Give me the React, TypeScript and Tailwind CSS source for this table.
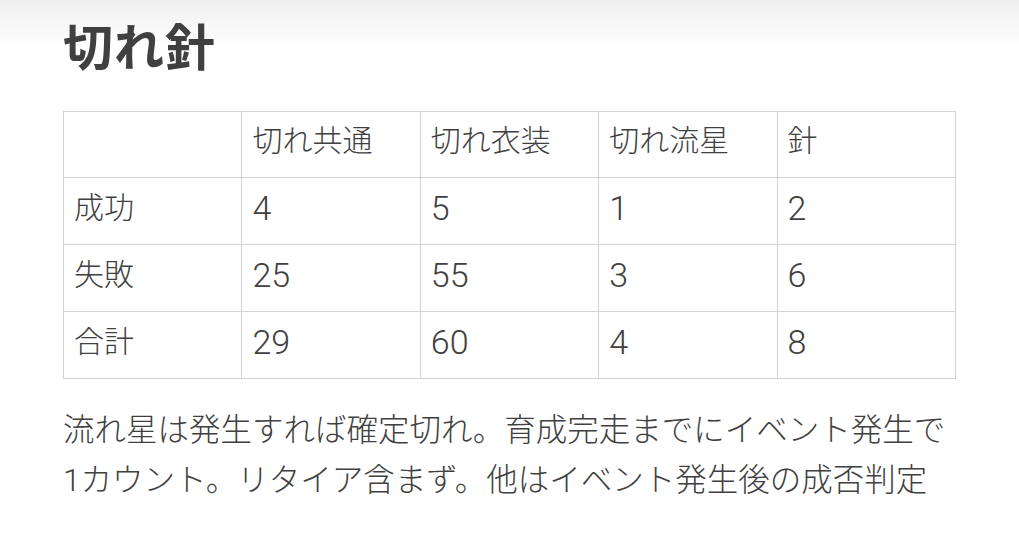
import React from 'react';

const head = ['', '切れ共通', '切れ衣装', '切れ流星', '針'];
const rows = [
  ['成功', '4', '5', '1', '2'],
  ['失敗', '25', '55', '3', '6'],
  ['合計', '29', '60', '4', '8'],
];

const App: React.FC = () => {
  return (
    <div
      className="relative min-h-[543px] bg-white text-[#404040] overflow-hidden"
      style={{ fontFamily: 'Roboto, "Noto Sans CJK JP", sans-serif' }}
    >
      <div className="pointer-events-none absolute inset-x-0 top-0 h-[48px] bg-gradient-to-b from-[#efefef] to-transparent" />
      <div className="relative w-[893px] ml-[63px] pt-[14px]">
        <h1 className="text-[50px] font-bold leading-[70px] tracking-[1px]">切れ針</h1>
        <table className="mt-[27px] w-full table-fixed border-collapse text-[30px] font-light">
          <tbody>
            <tr>
              {head.map((h, i) => (
                <td key={i} className="border border-[#d2d2d2] h-[66px] px-[10px] pb-[7px] leading-[44px] align-middle">
                  {h}
                </td>
              ))}
            </tr>
            {rows.map((r, ri) => (
              <tr key={ri}>
                {r.map((c, ci) => (
                  <td
                    key={ci}
                    className={`border border-[#d2d2d2] h-[67px] px-[10px] pb-[6px] leading-[44px] align-middle ${
                      ci === 0 ? '' : 'text-[34px]'
                    }`}
                  >
                    {c}
                  </td>
                ))}
              </tr>
            ))}
          </tbody>
        </table>
        <p className="mt-[27px] text-[31.5px] leading-[50px] font-light">
          流れ星は発生すれば確定切れ。育成完走までにイベント発生で1カウント。リタイア含まず。他はイベント発生後の成否判定
        </p>
      </div>
    </div>
  );
};

export default App;
